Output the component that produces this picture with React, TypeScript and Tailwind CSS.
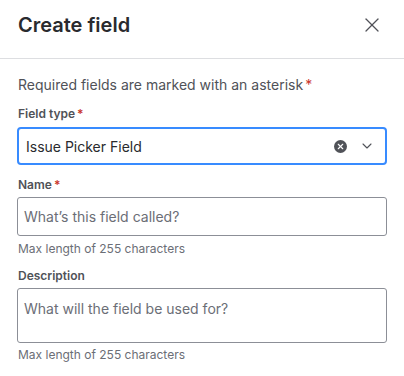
import { X, ChevronDown } from 'lucide-react';

const font = { fontFamily: 'Inter, "Noto Sans", sans-serif' };

const Req = () => <span className="text-[#c9372c] ml-[2px]">*</span>;

const App = () => {
  return (
    <div className="w-[404px] h-[376px] bg-white overflow-hidden" style={font}>
      {/* Header */}
      <div className="h-[59px] px-[18px] flex items-center justify-between border-b border-[#dddee1]">
        <h1 className="text-[20px] font-semibold text-[#292a2e] leading-6 -mt-[8px]">Create field</h1>
        <button className="text-[#505258] -mt-[8px] mr-[2px]">
          <X size={24} strokeWidth={1.25} />
        </button>
      </div>

      <div className="px-[17px]">
        <p className="mt-[16px] text-[14px] leading-5 text-[#505258] pl-[1px]">
          Required fields are marked with an asterisk
          <Req />
        </p>

        <label className="block mt-[11px] text-[12px] leading-4 font-semibold text-[#505258] pl-[1px]">
          Field type
          <Req />
        </label>
        <div className="mt-[5px] h-[38px] border-2 border-[#388bff] rounded-[4px] flex items-center pl-[7px] pr-[10px]">
          <span className="flex-1 text-[14px] text-[#292a2e]">Issue Picker Field</span>
          <span className="w-[13px] h-[13px] rounded-full bg-[#505258] flex items-center justify-center mr-[12px]">
            <X size={9} strokeWidth={3} className="text-white" />
          </span>
          <ChevronDown size={16} strokeWidth={1.6} className="text-[#505258]" />
        </div>

        <label className="block mt-[12px] text-[12px] leading-4 font-semibold text-[#505258] pl-[1px]">
          Name
          <Req />
        </label>
        <div className="mt-[4px] h-[39px] border border-[#8c8f97] rounded-[3px] flex items-center px-[6px]">
          <span className="text-[14px] text-[#6b6e76]">What’s this field called?</span>
        </div>
        <p className="mt-[5px] text-[12px] leading-4 text-[#6b6e76] pl-[1px]">Max length of 255 characters</p>

        <label className="block mt-[11px] text-[12px] leading-4 font-semibold text-[#505258] pl-[1px]">
          Description
        </label>
        <div className="mt-[4px] h-[55px] border border-[#8c8f97] rounded-[3px] px-[6px] pt-[7px]">
          <span className="text-[14px] leading-5 text-[#6b6e76]">What will the field be used for?</span>
        </div>
        <p className="mt-[4px] text-[12px] leading-4 text-[#6b6e76] pl-[1px]">Max length of 255 characters</p>
      </div>
    </div>
  );
};

export default App;
